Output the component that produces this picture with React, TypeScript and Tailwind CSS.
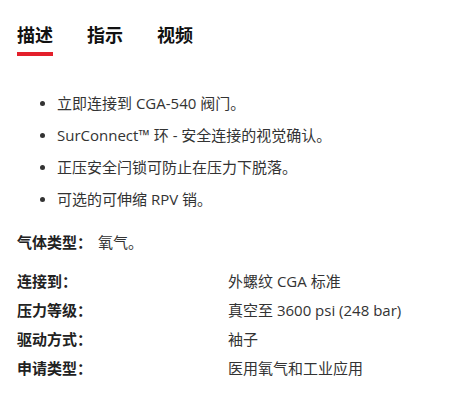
import React from "react";

const font = { fontFamily: '"Open Sans", "Noto Sans CJK SC", sans-serif' };

export default function App() {
  const bullets = [
    "立即连接到 CGA-540 阀门。",
    "SurConnect™ 环 - 安全连接的视觉确认。",
    "正压安全闩锁可防止在压力下脱落。",
    "可选的可伸缩 RPV 销。",
  ];
  const rows: [string, string][] = [
    ["连接到：", "外螺纹 CGA 标准"],
    ["压力等级：", "真空至 3600 psi (248 bar)"],
    ["驱动方式：", "袖子"],
    ["申请类型：", "医用氧气和工业应用"],
  ];
  return (
    <div className="w-[462px] h-[400px] bg-white pl-[17px] pt-[23px] text-[#333]" style={font}>
      <div className="flex gap-[34px]">
        <div className="flex flex-col">
          <span className="text-[18px] leading-[24px] font-bold text-[#111]">描述</span>
          <span className="mt-[5px] h-[4px] w-[36px] bg-[#e3202b]" />
        </div>
        <span className="text-[18px] leading-[24px] font-bold text-[#111]">指示</span>
        <span className="text-[18px] leading-[24px] font-bold text-[#111]">视频</span>
      </div>
      <ul className="mt-[31px] flex flex-col">
        {bullets.map((b) => (
          <li key={b} className="flex items-center h-[32px] text-[15px]">
            <span className="ml-[23px] w-[5px] h-[5px] rounded-full bg-[#333]" />
            <span className="ml-[12px]">{b}</span>
          </li>
        ))}
      </ul>
      <div className="mt-[15px] flex items-center h-[24px] text-[15px]">
        <span className="font-bold text-[#222]">气体类型：</span>
        <span className="ml-[6px]">氧气。</span>
      </div>
      <div className="mt-[13px] flex flex-col">
        {rows.map(([k, v]) => (
          <div key={k} className="flex items-center h-[29px] text-[15px]">
            <span className="w-[211px] font-bold text-[#222]">{k}</span>
            <span>{v}</span>
          </div>
        ))}
      </div>
    </div>
  );
}
